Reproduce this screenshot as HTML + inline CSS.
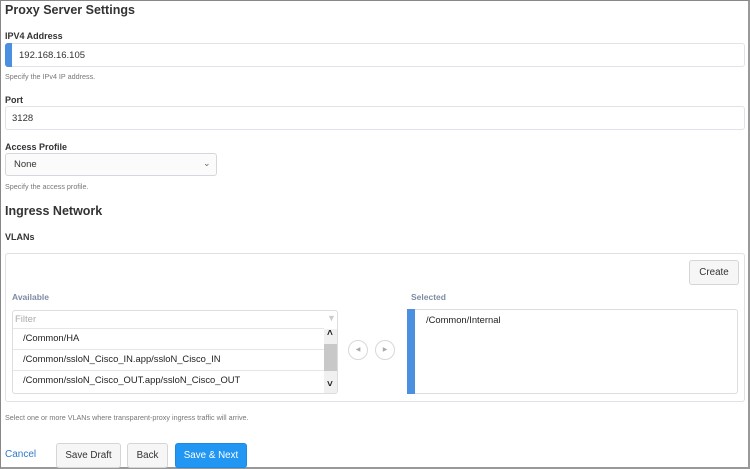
<!DOCTYPE html>
<html><head><meta charset="utf-8"><style>
*{box-sizing:border-box;margin:0;padding:0}
body{width:750px;height:469px;overflow:hidden;background:#fff;font-family:"Liberation Sans",Arial,sans-serif;color:#222;position:relative}
.frame{position:absolute;left:0;top:0;width:750px;height:469px;border:1px solid #888;border-right:2px solid #999;border-bottom:2px solid #999}
.a{position:absolute;white-space:nowrap}
h1{position:absolute;font-size:12.5px;font-weight:bold;color:#333}
.lbl{position:absolute;font-size:9px;font-weight:bold;color:#333}
.help{position:absolute;font-size:7.2px;color:#777}
.inp{position:absolute;border:1px solid #e2e2ea;border-radius:3px;background:#fff;font-size:9.5px;color:#333}
.btn{position:absolute;border:1px solid #d5d5d5;border-radius:3px;background:#f6f6f6;font-size:9.8px;color:#333;text-align:center;line-height:24px}
.sub{position:absolute;font-size:8.5px;font-weight:bold;color:#7d8ca3}
.row{position:absolute;left:0;width:311px;height:21px;border-top:1px solid #e6e6e6;font-size:9.4px;line-height:17px;padding-left:10px;color:#222}
.circ{position:absolute;width:20px;height:20px;border:1px solid #d8d8d8;border-radius:50%;font-size:6px;color:#aaa;text-align:center;line-height:18px}
</style></head><body>
<div class="frame"></div>
<h1 style="left:5px;top:3px">Proxy Server Settings</h1>
<div class="lbl" style="left:5px;top:31px">IPV4 Address</div>
<div class="inp" style="left:5px;top:43px;width:740px;height:24px"><div style="position:absolute;left:-1px;top:-1px;width:7px;height:24px;background:#4a8fe0;border-radius:3px 0 0 3px"></div><span class="a" style="left:13px;top:6px">192.168.16.105</span></div>
<div class="help" style="left:5px;top:72px">Specify the IPv4 IP address.</div>
<div class="lbl" style="left:5px;top:95px">Port</div>
<div class="inp" style="left:5px;top:106px;width:740px;height:24px"><span class="a" style="left:6px;top:6px">3128</span></div>
<div class="lbl" style="left:5px;top:142px">Access Profile</div>
<div class="inp" style="left:5px;top:153px;width:212px;height:23px;background:#fbfbfb;border-color:#d6d6de"><span class="a" style="left:8px;top:5px">None</span><span class="a" style="left:197px;top:4px;font-size:9px;color:#666">&#8964;</span></div>
<div class="help" style="left:5px;top:182px">Specify the access profile.</div>
<h1 style="left:5px;top:204px">Ingress Network</h1>
<div class="lbl" style="left:5px;top:232px">VLANs</div>
<div style="position:absolute;left:5px;top:253px;width:740px;height:149px;border:1px solid #e0e0e6;border-radius:3px"></div>
<div class="btn" style="left:689px;top:260px;width:50px;height:25px">Create</div>
<div class="sub" style="left:12px;top:292px">Available</div>
<div style="position:absolute;left:12px;top:310px;width:326px;height:84px;border:1px solid #ddd;border-radius:3px;overflow:hidden">
 <span class="a" style="left:2px;top:3px;font-size:9.5px;color:#aaa">Filter</span>
 <span class="a" style="left:314px;top:2px;font-size:9px;color:#ccc">&#9660;</span>
 <div class="row" style="top:17px">/Common/HA</div>
 <div class="row" style="top:38px">/Common/ssloN_Cisco_IN.app/ssloN_Cisco_IN</div>
 <div class="row" style="top:59px">/Common/ssloN_Cisco_OUT.app/ssloN_Cisco_OUT</div>
 <div style="position:absolute;left:311px;top:18px;width:14px;height:66px;background:#f0f0f0"></div>
 <div style="position:absolute;left:311px;top:33px;width:14px;height:27px;background:#c8c8c8"></div>
 <span class="a" style="left:314px;top:17px;font-size:10px;font-weight:bold">&#708;</span>
 <span class="a" style="left:314px;top:68px;font-size:10px;font-weight:bold">&#709;</span>
</div>
<div class="circ" style="left:348px;top:340px">&#9664;</div>
<div class="circ" style="left:375px;top:340px">&#9654;</div>
<div class="sub" style="left:411px;top:292px">Selected</div>
<div style="position:absolute;left:407px;top:309px;width:331px;height:85px;border:1px solid #ddd;border-radius:3px"><div style="position:absolute;left:-1px;top:-1px;width:8px;height:85px;background:#4a8fe0"></div><span class="a" style="left:18px;top:4px;font-size:9.4px">/Common/Internal</span></div>
<div class="help" style="left:5px;top:413px">Select one or more VLANs where transparent-proxy ingress traffic will arrive.</div>
<div class="a" style="left:5px;top:449px;font-size:10px;color:#2f7ac8">Cancel</div>
<div class="btn" style="left:56px;top:443px;width:65px;height:25px">Save Draft</div>
<div class="btn" style="left:127px;top:443px;width:41px;height:25px">Back</div>
<div class="btn" style="left:175px;top:443px;width:72px;height:25px;background:#2196f3;border-color:#1e88e5;color:#fff">Save &amp; Next</div>
</body></html>
